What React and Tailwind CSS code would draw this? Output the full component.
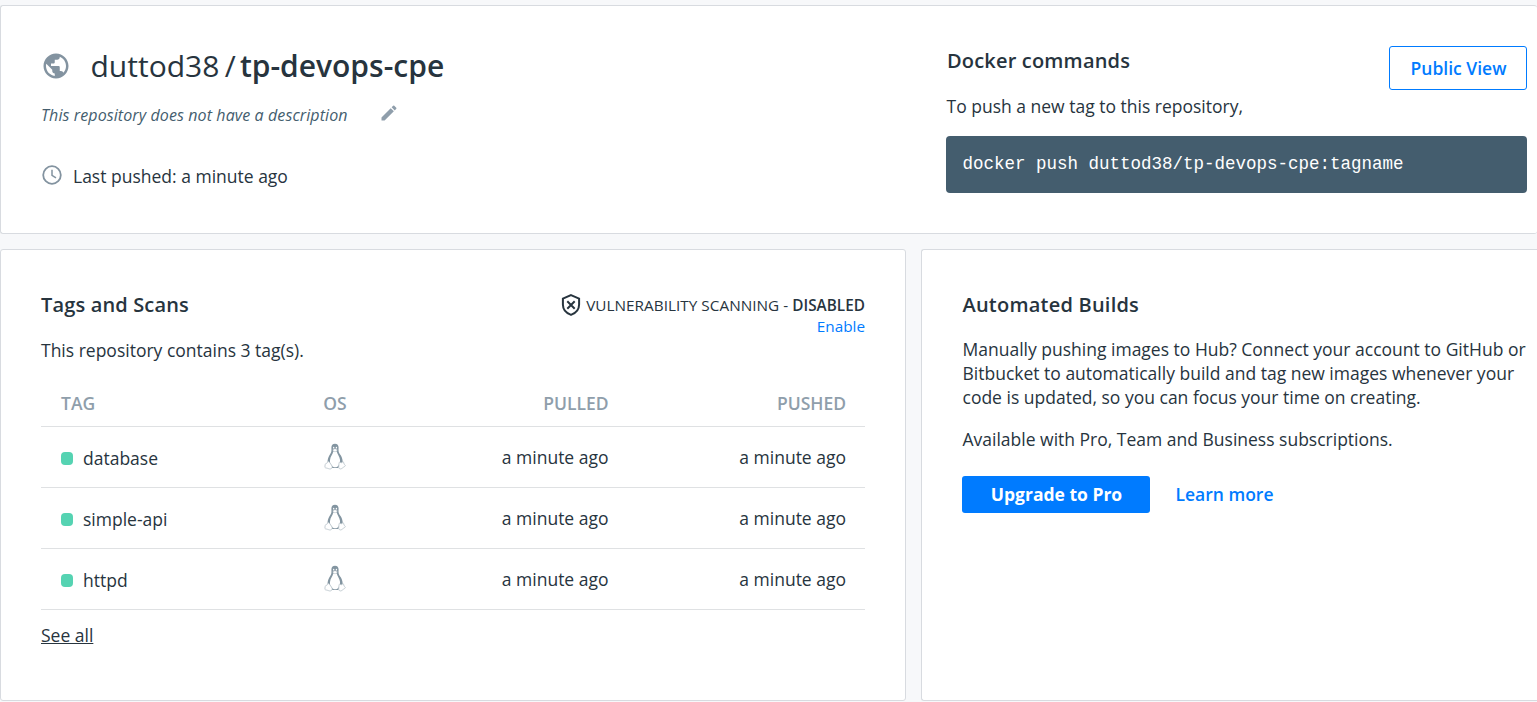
import React from 'react';
import { MdPublic, MdEdit } from 'react-icons/md';

const TAGS = ['database', 'simple-api', 'httpd'];

function ClockIcon() {
  return (
    <svg className="h-5 w-5 shrink-0" viewBox="0 0 20 20" fill="none" stroke="#8393a0" strokeWidth="1.8">
      <circle cx="10" cy="10" r="8.8" />
      <path d="M10 4.800v5.500l4 2.500" strokeWidth="1.5" />
    </svg>
  );
}

function ShieldIcon() {
  return (
    <svg className="h-6 w-5 shrink-0" viewBox="0 0 20 24" fill="none" stroke="#27343e" strokeWidth="2">
      <path d="M10 2.200 L18.100 5.600 V11.600 C18.100 16.300 14.900 20.200 10 21.900 C5.100 20.200 1.900 16.300 1.900 11.600 V5.600 Z" />
      <path d="M6.300 8.300 L13.700 15.700 M13.700 8.300 L6.300 15.700" />
    </svg>
  );
}

function LinuxIcon() {
  return (
    <svg className="h-[27px] w-[22px]" viewBox="0 0 22 27">
      <path
        d="M11 .8C8.600.8 7.400 2.400 7.400 4.600c0 2 .3 3.500-.5 5.100-1 2-2.600 4-3 6.400-.3 1.700-.5 3-.5 4.400L8 25h6l4.700-4.500c.2-3-.5-5.700-1.800-7.900-1-1.700-2.100-2.800-2.300-4.400-.2-1.300 0-2.300 0-3.600C14.600 2.400 13.400.8 11 .8z"
        fill="#8395a1"
      />
      <path d="M9.300 8.600c-.5 2.500-3 5.100-3.300 8.400-.2 2.300 0 3.700 1.500 5.200 1 1.300 2 2.100 3.600 2.100s3-.9 3.700-2.400c1-1.600 1.400-3.400 1.200-5.200-.4-3.100-2.600-5.300-3.300-8.100z" fill="#fff" />
      <path d="M8.800 6.700 11 5.700l2.300 1c-.2 1.200-1.200 2-2.300 2s-2-.8-2.200-2z" fill="#fff" stroke="#b5c0c8" strokeWidth=".4" />
      <ellipse cx="9.700" cy="4.700" rx=".7" ry=".9" fill="#fff" />
      <ellipse cx="12.400" cy="4.700" rx=".7" ry=".9" fill="#fff" />
      <path d="M4 18.600c1.100-.2 1.700.9 2.500 2.100.9 1.300 2.100 2.500 1.500 4-.6 1.400-2.100 1.500-3.600.9-1.400-.6-3.200-.5-3.500-1.300-.2-.8.400-1.500.2-2.500-.1-1.100.9-1.200 1.700-1.500.7-.3.500-1.500 1.200-1.700z" fill="#fff" stroke="#b5c0c8" strokeWidth=".8" />
      <path d="M15.200 19.600c.4-.9 1.200-.1 2 .1.900.1 1.400-1.200 2.100-.9.700.4.300 1.600.8 2.300.5.700 1.300.9 1.200 1.600-.2.800-1.700 1.300-2.700 2.200-.9.800-2 1.400-3.100.8-1.100-.7-.8-2.200-.6-3.600.1-.9 0-1.800.3-2.500z" fill="#fff" stroke="#b5c0c8" strokeWidth=".8" />
    </svg>
  );
}

function RepositoryHeader() {
  return (
    <header className="flex h-[229px] shrink-0 justify-between rounded-[3px] border border-r-0 border-[#d8dbe0] bg-white pt-10 pr-2.5 pl-10">
      <div>
        <div className="flex h-10 items-center">
          <MdPublic className="h-[30px] w-[30px] text-[#8393a0]" />
          <h1 className="ml-[19.500px] text-[30px] leading-10 whitespace-pre">
            duttod38<span className="mr-1 ml-[5.500px]">/</span><span className="font-semibold">tp-devops-cpe</span>
          </h1>
        </div>
        <div className="mt-[15px] flex h-6 items-center">
          <p className="mt-[3px] text-base leading-6 tracking-[0.1px] text-[#445d6e] italic">This repository does not have a description</p>
          <MdEdit className="ml-[31px] h-5 w-5 text-[#8f9eab]" />
        </div>
        <div className="mt-[38px] ml-[1px] flex h-6 items-center">
          <ClockIcon />
          <p className="mt-[2px] ml-[11px] text-[17.500px] leading-6">Last pushed: a minute ago</p>
        </div>
      </div>
      <div className="w-[581px]">
        <div className="flex h-[46px] items-start justify-between">
          <h2 className="ml-px text-[20px] leading-[30px] font-semibold tracking-[0.18px]">Docker commands</h2>
          <button className="h-[44px] w-[138px] shrink-0 rounded-[3px] border border-[#007bff] pl-px text-[17.500px] font-semibold text-[#007bff]">Public View</button>
        </div>
        <p className="mt-0.5 ml-[0.5px] text-[17.500px] leading-6">To push a new tag to this repository,</p>
        <pre className="mt-[18px] h-[57px] rounded-[4px] bg-[#445d6e] px-[16.500px] font-['Courier_New','Liberation_Mono',monospace] text-[17.500px] leading-[57px] text-white">docker push duttod38/tp-devops-cpe:tagname</pre>
      </div>
    </header>
  );
}

function TagsPanel() {
  return (
    <section className="h-[452px] w-[906px] shrink-0 rounded-[3px] border border-[#d8dbe0] bg-white px-10 pt-10">
      <div className="flex h-[46px] justify-between">
        <h2 className="text-[20px] leading-[30px] font-semibold tracking-[0.15px]">Tags and Scans</h2>
        <div className="flex flex-col items-end text-[15.300px] leading-[21px]">
          <div className="mt-[3px] flex h-6 items-center gap-[5px]">
            <ShieldIcon />
            <p className="tracking-[0.03px]">VULNERABILITY SCANNING - <span className="font-semibold">DISABLED</span></p>
          </div>
          <a className="-mt-px text-[#007bff]">Enable</a>
        </div>
      </div>
      <p className="mt-0.5 text-[17.500px] leading-6">This repository contains 3 tag(s).</p>
      <table className="mt-4 w-[824px] table-fixed border-collapse text-[17.500px] leading-6">
        <thead>
          <tr className="h-12 border-b border-[#dfe1e3] text-[#8f9eab]">
            <th className="w-[234px] pt-[2px] pl-5 text-left font-semibold">TAG</th>
            <th className="w-[120px] pt-[2px] font-semibold">OS</th>
            <th className="w-[213.500px] pt-[2px] text-right font-semibold">PULLED</th>
            <th className="pt-[2px] pr-[19px] text-right font-semibold">PUSHED</th>
          </tr>
        </thead>
        <tbody>
          {TAGS.map((tag) => (
            <tr key={tag} className="h-[61px] border-b border-[#dfe1e3]">
              <td className="pl-5">
                <div className="flex items-center gap-2.5 pt-[2px]">
                  <span className="mt-[2px] h-[13px] w-3 rounded-[4px] bg-[#55d3b2]" />
                  {tag}
                </div>
              </td>
              <td><div className="flex justify-center"><LinuxIcon /></div></td>
              <td className="text-right">a minute ago</td>
              <td className="pr-[19px] text-right">a minute ago</td>
            </tr>
          ))}
        </tbody>
      </table>
      <a className="mt-[13px] inline-block text-[17.500px] leading-6 underline">See all</a>
    </section>
  );
}

function BuildsPanel() {
  return (
    <section className="h-[452px] grow rounded-l-[3px] border border-r-0 border-[#d8dbe0] bg-white pt-10 pl-10">
      <h2 className="ml-[0.5px] text-[20px] leading-[30px] font-semibold tracking-[0.22px]">Automated Builds</h2>
      <p className="mt-[17px] ml-[0.5px] text-[17.500px] leading-6 whitespace-nowrap">
        Manually pushing images to Hub? Connect your account to GitHub or<br />
        Bitbucket to automatically build and tag new images whenever your<br />
        code is updated, so you can focus your time on creating.
      </p>
      <p className="mt-[18px] ml-[0.5px] text-[17.500px] leading-6">Available with Pro, Team and Business subscriptions.</p>
      <div className="mt-[25px] flex items-center text-[17.500px]">
        <button className="h-[37px] w-[188px] rounded-[3px] bg-[#007bff] pl-px font-bold text-white">Upgrade to Pro</button>
        <a className="ml-[25.500px] font-semibold text-[#007bff]">Learn more</a>
      </div>
    </section>
  );
}

export default function App() {
  return (
    <main className="flex h-[702px] w-full flex-col gap-[15px] overflow-hidden bg-[#f7f8fa] pt-[5px] font-['Open_Sans',sans-serif] text-[#27343e]">
      <RepositoryHeader />
      <div className="flex gap-[15px]">
        <TagsPanel />
        <BuildsPanel />
      </div>
    </main>
  );
}
